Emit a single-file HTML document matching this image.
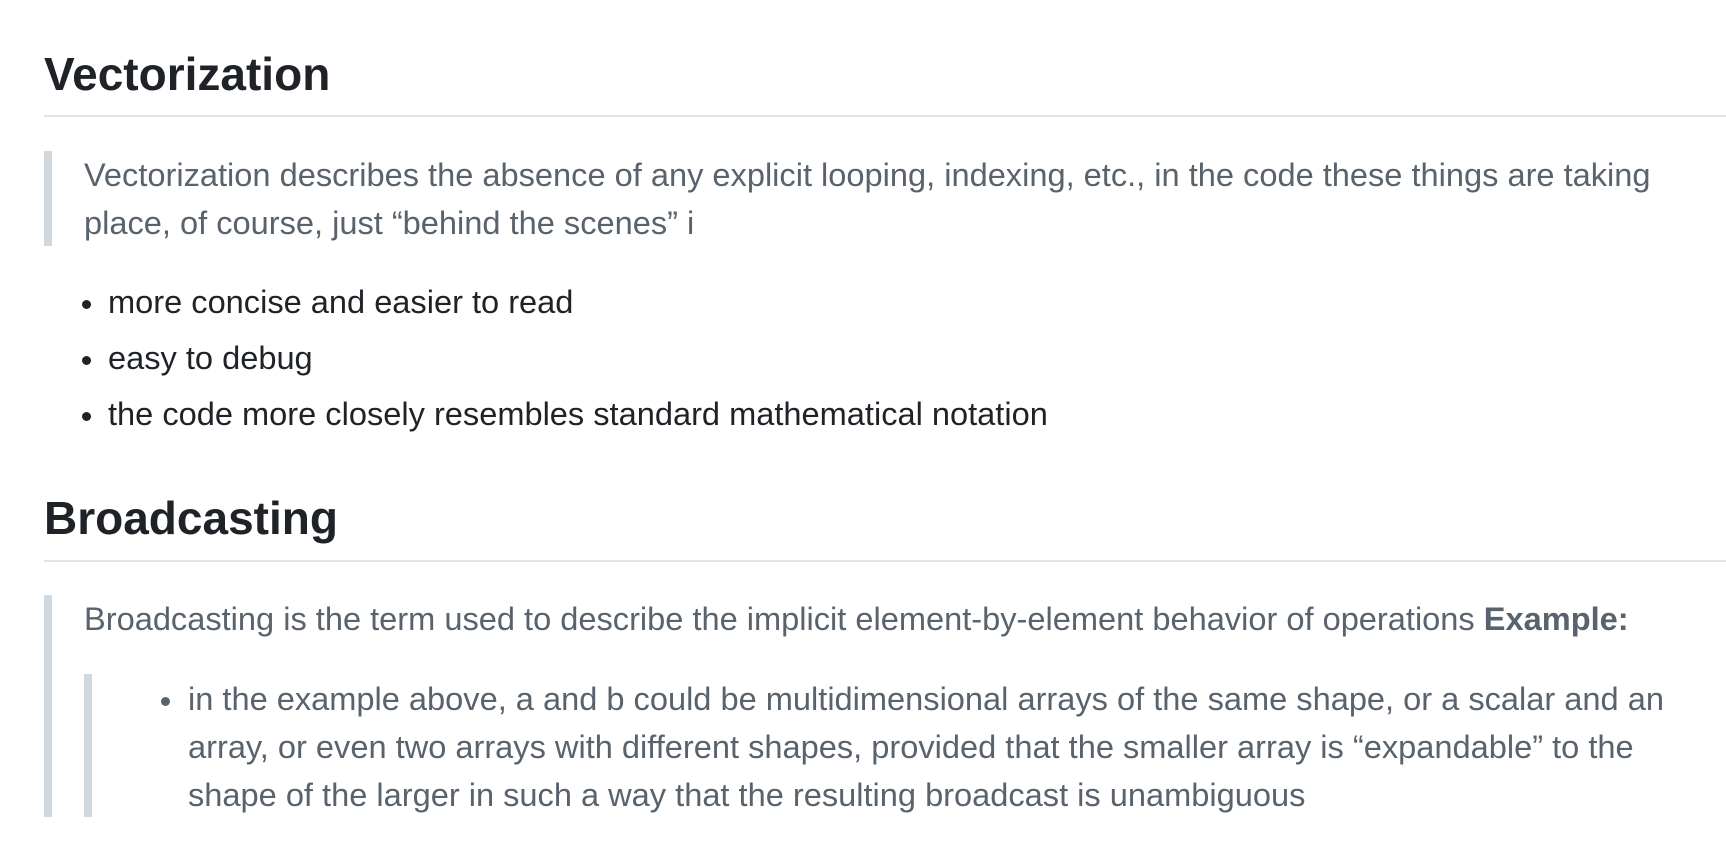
<!DOCTYPE html>
<html><head><meta charset="utf-8"><style>
body{margin:0;width:1726px;height:862px;background:#fff;overflow:hidden;font-family:"Liberation Sans",Arial,sans-serif;position:relative}
.a{position:absolute;white-space:nowrap}
.h{font-size:46px;font-weight:bold;color:#1f2328;line-height:58px;left:44px}
.hr{position:absolute;left:44px;right:0;height:2px;background:#dfe3e8}
.t{font-size:32.6px;line-height:48px;color:#59636e}
.l{font-size:32.6px;line-height:48px;color:#1f2328;left:108px}
.bar{position:absolute;width:8px;background:#d1d9e0}
.dot{position:absolute;width:9px;height:9px;border-radius:50%}
</style></head><body>
<div class="a h" style="top:45px">Vectorization</div>
<div class="hr" style="top:115px"></div>
<div class="bar" style="left:44px;top:151px;height:95px"></div>
<div class="a t" style="left:84px;top:151px">Vectorization describes the absence of any explicit looping, indexing, etc., in the code these things are taking</div>
<div class="a t" style="left:84px;top:199px">place, of course, just “behind the scenes” i</div>
<div class="dot" style="left:82px;top:300px;background:#1f2328"></div>
<div class="a l" style="top:278px">more concise and easier to read</div>
<div class="dot" style="left:82px;top:356px;background:#1f2328"></div>
<div class="a l" style="top:334px">easy to debug</div>
<div class="dot" style="left:82px;top:412px;background:#1f2328"></div>
<div class="a l" style="top:390px">the code more closely resembles standard mathematical notation</div>
<div class="a h" style="top:489px">Broadcasting</div>
<div class="hr" style="top:560px"></div>
<div class="bar" style="left:44px;top:595px;height:222px"></div>
<div class="a t" style="left:84px;top:595px">Broadcasting is the term used to describe the implicit element-by-element behavior of operations <b>Example:</b></div>
<div class="bar" style="left:84px;top:674px;height:143px"></div>
<div class="dot" style="left:161px;top:697px;background:#59636e"></div>
<div class="a t" style="left:188px;top:675px">in the example above, a and b could be multidimensional arrays of the same shape, or a scalar and an</div>
<div class="a t" style="left:188px;top:723px">array, or even two arrays with different shapes, provided that the smaller array is “expandable” to the</div>
<div class="a t" style="left:188px;top:771px">shape of the larger in such a way that the resulting broadcast is unambiguous</div>
</body></html>
